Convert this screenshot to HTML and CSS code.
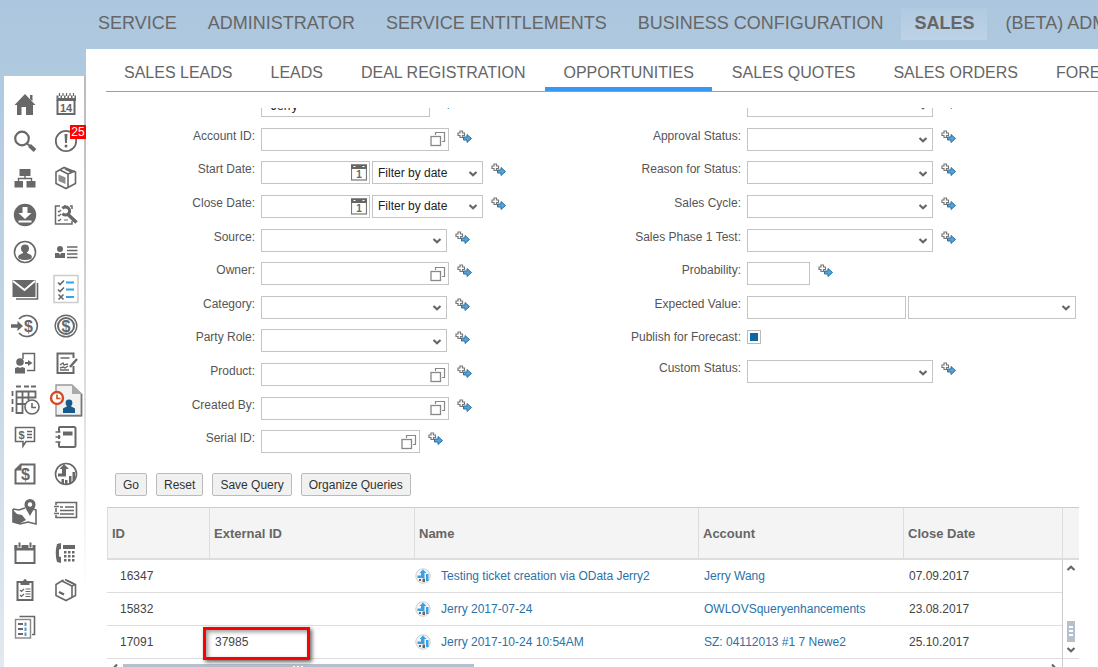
FILE: index.html
```html
<!DOCTYPE html>
<html lang="en">
<head>
  <meta charset="UTF-8" />
  <title>Opportunities</title>
  <link rel="stylesheet" href="styles.css">
</head>
<body>
  <!-- shared icons -->
  <svg class="defs" aria-hidden="true">
    <symbol id="include" viewBox="0 0 15 13">
      <path d="M3 1h2.500v2h2v2.500h-2v2H3v-2H1V3h2z" fill="#fff" stroke="#777" stroke-width="1.200"/>
      <path d="M6.500 7H10V4.500l4.500 4-4.500 4V10H6.500z" fill="#5d9fce" stroke="#2273a8"/>
    </symbol>
    <symbol id="chevron" viewBox="0 0 10 8">
      <path d="M1.500 2L5 5.200 8.500 2" fill="none" stroke="#666" stroke-width="2.200"/>
    </symbol>
    <symbol id="lookup" viewBox="0 0 16 16">
      <path d="M5.500 4V1.500h9v9H12" fill="none" stroke="#888" stroke-width="1.200"/>
      <rect x="1" y="5.500" width="9.500" height="9" fill="#fff" stroke="#888" stroke-width="1.300"/>
    </symbol>
    <symbol id="datepick" viewBox="0 0 16 17">
      <rect x=".5" y="1" width="15" height="15" fill="#fff" stroke="#777" stroke-width="1.200"/>
      <path d="M0 .5h16V5H0z" fill="#666"/>
      <path d="M2.500 2h2v1h-2zM11.500 2h2v1h-2z" fill="#fff"/>
      <text x="8" y="14" text-anchor="middle" class="tiny">1</text>
    </symbol>
    <symbol id="opp" viewBox="0 0 16 16">
      <circle cx="8" cy="8" r="7.200" fill="#f4f6f8" stroke="#ccc"/>
      <path d="M2.500 7.500H6V5H4.500L8 1.500 11.500 5H9.500v5h-7z" fill="#3aa0e0"/>
      <path d="M11 6h2.500v7H11z" fill="#3aa0e0"/>
      <path d="M4 11h2v2H4zM7.500 10.500H10V14H7.500z" fill="#666"/>
    </symbol>
  </svg>

  <nav class="top-nav">
    <a href="#">SERVICE</a>
    <a href="#">ADMINISTRATOR</a>
    <a href="#">SERVICE ENTITLEMENTS</a>
    <a href="#">BUSINESS CONFIGURATION</a>
    <a href="#" class="active">SALES</a>
    <a href="#">(BETA) ADMINISTRATOR</a>
  </nav>

  <div class="layout">
    <aside class="sidebar">
      <a href="#" aria-label="Home"><svg viewBox="0 0 24 24"><path class="f" d="M12 2l10.500 11H20v10h-7v-8H8.500v8H4V13H1.500zM17 3h2.500v6L17 7z"/></svg></a>
      <a href="#" aria-label="Calendar"><svg viewBox="0 0 24 24"><path d="M3.500 8v14h17V8" stroke-width="2"/><path class="f" d="M2.500 3.500h2V6h2V3.500h1.500V6h2V3.500h1.500V6h2V3.500H15V6h2V3.500h1.500V6h2V3.500h1.500V9h-19.500z"/><path d="M5.500 1v3M9 1v3M12.500 1v3M16 1v3M19.500 1v3" stroke-width="1.200"/><text x="12" y="20" text-anchor="middle" class="digits">14</text></svg></a>
      <a href="#" aria-label="Search"><svg viewBox="0 0 24 24"><circle cx="9" cy="9.500" r="6.800" stroke-width="2.200"/><path d="M14 14.500L17 17" stroke-width="2"/><path d="M16.500 16.500l5.500 5" stroke-width="4"/></svg></a>
      <a href="#" aria-label="Alerts"><svg viewBox="0 0 24 24"><circle cx="12" cy="12" r="10.200" stroke-width="1.800"/><path class="f" d="M10.500 5h3l-.6 9h-1.800z"/><circle class="f" cx="12" cy="17" r="1.500"/></svg><span class="badge">25</span></a>
      <a href="#" aria-label="Organization"><svg viewBox="0 0 24 24"><path class="f" d="M6.500 3h11v7h-11zM1.500 15H10v6.500H1.500zM13.500 15H22.500v6.500h-9z"/><path d="M12 9v3.500M5.500 16v-3.500h13V16" stroke-width="1.400"/></svg></a>
      <a href="#" aria-label="Products"><svg viewBox="0 0 24 24"><path d="M10 1.500L2 6v11.500l10 5 9.500-5V6z" stroke-width="1.600"/><path d="M6 4l8 4v13M14 8l7-3" stroke-width="1.600"/><path d="M11 2.500l7 3.500" stroke-width="2"/><path class="f" d="M4.500 8.500l7 3V18l-7-3z" opacity=".75"/></svg></a>
      <a href="#" aria-label="Download"><svg viewBox="0 0 24 24"><circle class="f" cx="12" cy="12" r="11.200"/><path d="M9.500 4h5v6h4L12 16 5.500 10h4zM5.500 17.500h13v2h-13z" fill="#fff" stroke="none"/></svg></a>
      <a href="#" aria-label="Service check"><svg viewBox="0 0 24 24"><path d="M6 3H1.500v18H18v-3M12 3h-2M16 3h2v3" stroke-width="1.500"/><path d="M4 8l1 1 2-2M4 12l1 1 2-2M4 17l1 1 2-2M10 17h4" stroke-width="1.200"/><path d="M14 11.500l8.500 8" stroke-width="3.500"/><path d="M8.500 5.500a4 4 0 1 1 0 5" stroke-width="3"/></svg></a>
      <a href="#" aria-label="Contact"><svg viewBox="0 0 24 24"><circle cx="12" cy="12" r="10.500" stroke-width="1.600"/><circle class="f" cx="12" cy="8.500" r="4"/><path class="f" d="M10 11h4v2l4 2c1 1 1 2 .500 3.500Q12 21.500 5.500 18.500C5 17 5 16 6 15l4-2z"/></svg></a>
      <a href="#" aria-label="Contact list"><svg viewBox="0 0 24 24"><circle class="f" cx="6" cy="9" r="3"/><path class="f" d="M1 13l4 0 1 2 1-2 4 0v5H1z"/><path d="M13 7h10.500M13 10.500h10.500M13 14h10.500M13 17.500h10.500" stroke-width="1.500"/></svg></a>
      <a href="#" aria-label="Mail"><svg viewBox="0 0 24 24"><path class="f" d="M-.5 3H22.500v17H-.5z"/><path d="M0 4l11.500 9L22 4" stroke="#fff" stroke-width="1.800"/><path d="M24.500 6v16H3" stroke-width="1.600"/></svg></a>
      <a href="#" aria-label="Tasks"><svg viewBox="0 0 24 24"><rect x="0" y="-1.500" width="24" height="27" stroke="#ccc" stroke-width="1.500"/><path d="M4 5.500l2 2 4-4M4 12.500l2 2 4-4M4.500 17.500l5 5M9.500 17.500l-5 5" stroke-width="1.600"/><path d="M12 5.500h8M12 12.500h8M12 20h8" stroke="#34a4ea" stroke-width="1.800"/></svg></a>
      <a href="#" aria-label="Sales lead"><svg viewBox="0 0 24 24"><path d="M6 5a10.500 10.500 0 1 1 0 14" stroke-width="1.600"/><path d="M-2 12h8" stroke-width="3.500"/><path class="f" d="M4.500 7l5.500 5-5.500 5z"/><text x="15.500" y="18" text-anchor="middle" class="dollar">$</text></svg></a>
      <a href="#" aria-label="Deals"><svg viewBox="0 0 24 24"><circle cx="12" cy="12" r="10.800" stroke-width="1.400"/><circle cx="12" cy="12" r="8" stroke-width="2"/><text x="12" y="17.500" text-anchor="middle" class="dollar">$</text></svg></a>
      <a href="#" aria-label="Partner entry"><svg viewBox="0 0 24 24"><path d="M10 8V2.500h11.500v17H14" stroke-width="1.500"/><circle class="f" cx="7" cy="11" r="3.800"/><path class="f" d="M2 17l3-1 2 1 2-1 3 1v5.500H2z"/><path d="M12 12h4" stroke-width="2"/><path class="f" d="M15 9l4.500 3-4.500 3z"/></svg></a>
      <a href="#" aria-label="Contracts"><svg viewBox="0 0 24 24"><path d="M19.500 7V2.500h-16v19.500h16v-7" stroke-width="2"/><path d="M6.500 7h9" stroke-width="1.500"/><path d="M6 14l3-2 1 2 4-1M6 17l3-1 2 1 3-2M6 19h9" stroke-width="1.400"/><path d="M23 8l-7 8" stroke-width="2.400"/></svg></a>
      <a href="#" aria-label="Schedule"><svg viewBox="0 0 24 24"><path d="M3-1.500h5M11-1.500h5M18-1.500h5M-.5 3v5M-.5 11v5M-.5 19v5" stroke-width="1.800"/><path d="M3.500 3.500h19v6h-19zM3.500 9.500v15.500h6v-21.500M3.500 16h11M15.500 3.500v9" stroke-width="1.800"/><circle cx="19" cy="19" r="7" fill="#fff" stroke-width="1.600"/><path d="M19 15v4.500h4" stroke-width="1.600"/></svg></a>
      <a href="#" aria-label="Customer visits"><svg viewBox="0 0 24 24"><path d="M2-3h16l9.500 9v22H2z" fill="#f1f1f1" stroke="#999" stroke-width="1.400"/><path d="M18-3v9h9.500z" fill="#aaa" stroke="none"/><path d="M2 27.500h25.500V6" stroke="#777" stroke-width="1.600"/><circle cx="3" cy="10" r="6" fill="#fff" stroke="#d04a28" stroke-width="2.400"/><path d="M3 6.500V10.500h3.500" stroke="#d04a28" stroke-width="1.600"/><circle cx="15" cy="15" r="3.400" fill="#175b8c" stroke="none"/><path d="M9 25v-4.500l4.500-2.500h3l4.500 2.500V25z" fill="#175b8c" stroke="none"/></svg></a>
      <a href="#" aria-label="Pricing"><svg viewBox="0 0 24 24"><path d="M2.500 2.500h19v14H13l-3 4.500v-4.500H2.500z" stroke-width="1.600"/><path d="M14 6.500h5M14 9.500h5M14 12.500h5" stroke-width="1.500"/><text x="8.500" y="13.500" text-anchor="middle" class="digits">$</text></svg></a>
      <a href="#" aria-label="Notebook"><svg viewBox="0 0 24 24"><path d="M5 7V3q0-1 1-1h14q1.500 0 1.500 1.500v17q0 1.500-1.500 1.500H6q-1 0-1-1v-4M5 10v4" stroke-width="2"/><path d="M1.500 7h5M1.500 12h5M1.500 17h5" stroke-width="1.600"/><path class="f" d="M9 6.500h9.500v4H9z"/></svg></a>
      <a href="#" aria-label="Quotes"><svg viewBox="0 0 24 24"><path d="M8 2.500h13.500v19h-19V8z" stroke-width="2"/><path class="f" d="M1.500 8.500l7-7v7z"/><text x="12.500" y="17.500" text-anchor="middle" class="dollar">$</text></svg></a>
      <a href="#" aria-label="Opportunities"><svg viewBox="0 0 24 24"><circle cx="12" cy="12" r="10.500" stroke-width="1.600"/><path class="f" d="M4 11.500h4V7H5.500L10 2l5 5h-3v7.500H4zM11 18h2.500v4H11zM15 14h2.500v7H15zM18.500 10H21v9l-2.500 1zM7.500 17H10v5H7.500z"/></svg></a>
      <a href="#" aria-label="Map"><svg viewBox="0 0 24 24"><path d="M0 10v13l7 2 8-2 8 2V11l-3-1M0 10l6 1 6-2" stroke-width="1.600"/><path class="f" d="M0 11l4 4 5 1 4 5-7 4-6-2z"/><path class="f" d="M17 0a5.500 5.500 0 0 0-5.500 5.500C11.500 9 14 11 17 17c3-6 5.500-8 5.500-11.500A5.500 5.500 0 0 0 17 0z"/><circle cx="17" cy="5.500" r="2.200" fill="#fff" stroke="none"/></svg></a>
      <a href="#" aria-label="Tickets"><svg viewBox="0 0 24 24"><path d="M2 6V3.500h20.500v15H2V16M2 9v4" stroke-width="1.600"/><path d="M0 7.500h5M0 14.500h5M6 8h3M11 8h9M6 11.500h14M6 15h14" stroke-width="1.500"/></svg></a>
      <a href="#" aria-label="Activities"><svg viewBox="0 0 24 24"><rect x="2.500" y="5" width="19" height="17" stroke-width="2"/><path class="f" d="M1.500 4H21.500v5.500H1.500z"/><path d="M6.500 1.500V7M17.500 1.500V7" stroke="#fff" stroke-width="4"/><path d="M6.500 1.500v5M17.500 1.500v5" stroke-width="2"/></svg></a>
      <a href="#" aria-label="Phone calls"><svg viewBox="0 0 24 24"><path class="f" d="M3 3l4-1v6l-2 .5v7l2 .5v6l-4-1Q.5 12 3 3zM9 4h12v4H9zM10 10h2.500v2.500H10zM14 10h2.500v2.500H14zM18 10h2.500v2.500H18zM10 14h2.500v2.500H10zM14 14h2.500v2.500H14zM18 14h2.500v2.500H18zM10 18h2.500v2.500H10zM14 18h2.500v2.500H14zM18 18h2.500v2.500H18z"/></svg></a>
      <a href="#" aria-label="Surveys"><svg viewBox="0 0 24 24"><rect x="4.500" y="4" width="15" height="18" stroke-width="2"/><path class="f" d="M7.500 3h2.500q2-4 4 0h2.500v4h-9z"/><path d="M7 12l1.500 1.500 2.500-2.500M7 17l1.500 1.500 2.500-2.500M12.500 11h5M12.500 13.500h5M12.500 16h5M12.500 18.500h5" stroke-width="1.200"/></svg></a>
      <a href="#" aria-label="Packages"><svg viewBox="0 0 24 24"><path d="M9.500 2L2 6.500v11l10 5 9.500-5v-11L13 2.500" stroke-width="1.600"/><path d="M8 3l10 5v11M18 8l3-1.500M11 1.500l9 4.500" stroke-width="1.600"/><path d="M5 14l5 2.500" stroke-width="2.400"/></svg></a>
      <a href="#" aria-label="Reports"><svg viewBox="0 0 24 24"><path d="M6.500 1.500h15v18H19" stroke-width="1.600"/><rect x="2.500" y="4.500" width="15" height="18.500" stroke="#888" stroke-width="1.400"/><path d="M5 9h5M5 14h5M5 19h5" stroke-width="1.800"/><path d="M12.500 7.500V11M12.500 12.500V16M12.500 17.500V21" stroke="#4b9ed0" stroke-width="2"/></svg></a>
    </aside>

    <main class="panel">
      <nav class="tabs">
        <a href="#">SALES LEADS</a>
        <a href="#">LEADS</a>
        <a href="#">DEAL REGISTRATION</a>
        <a href="#" class="active">OPPORTUNITIES</a>
        <a href="#">SALES QUOTES</a>
        <a href="#">SALES ORDERS</a>
        <a href="#">FORECASTS</a>
      </nav>

      <div class="content">
        <form>
          <div class="fields">
            <div class="column">
              <div class="row"><label for="name">Name:</label><input type="text" id="name" class="w-name" value="Jerry"><svg class="inc"><use href="#include"/></svg></div>
              <div class="row"><label for="account">Account ID:</label><span class="field w-lookup"><input type="text" id="account"><svg class="look"><use href="#lookup"/></svg></span><svg class="inc"><use href="#include"/></svg></div>
              <div class="row"><label for="start">Start Date:</label><span class="field w-date"><input type="text" id="start"><svg class="date"><use href="#datepick"/></svg></span><span class="field w-filter"><select aria-label="Start date filter"><option>Filter by date</option></select><svg class="chev"><use href="#chevron"/></svg></span><svg class="inc"><use href="#include"/></svg></div>
              <div class="row"><label for="close">Close Date:</label><span class="field w-date"><input type="text" id="close"><svg class="date"><use href="#datepick"/></svg></span><span class="field w-filter"><select aria-label="Close date filter"><option>Filter by date</option></select><svg class="chev"><use href="#chevron"/></svg></span><svg class="inc"><use href="#include"/></svg></div>
              <div class="row"><label for="source">Source:</label><span class="field w-select"><select id="source"><option></option></select><svg class="chev"><use href="#chevron"/></svg></span><svg class="inc"><use href="#include"/></svg></div>
              <div class="row"><label for="owner">Owner:</label><span class="field w-lookup"><input type="text" id="owner"><svg class="look"><use href="#lookup"/></svg></span><svg class="inc"><use href="#include"/></svg></div>
              <div class="row"><label for="category">Category:</label><span class="field w-select"><select id="category"><option></option></select><svg class="chev"><use href="#chevron"/></svg></span><svg class="inc"><use href="#include"/></svg></div>
              <div class="row"><label for="party">Party Role:</label><span class="field w-select"><select id="party"><option></option></select><svg class="chev"><use href="#chevron"/></svg></span><svg class="inc"><use href="#include"/></svg></div>
              <div class="row"><label for="product">Product:</label><span class="field w-lookup"><input type="text" id="product"><svg class="look"><use href="#lookup"/></svg></span><svg class="inc"><use href="#include"/></svg></div>
              <div class="row"><label for="created">Created By:</label><span class="field w-lookup"><input type="text" id="created"><svg class="look"><use href="#lookup"/></svg></span><svg class="inc"><use href="#include"/></svg></div>
              <div class="row"><label for="serial">Serial ID:</label><span class="field w-medium"><input type="text" id="serial"><svg class="look"><use href="#lookup"/></svg></span><svg class="inc"><use href="#include"/></svg></div>
            </div>

            <div class="column short">
              <div class="row"><label for="status">Status:</label><span class="field w-select"><select id="status"><option></option></select><svg class="chev"><use href="#chevron"/></svg></span><svg class="inc"><use href="#include"/></svg></div>
              <div class="row"><label for="approval">Approval Status:</label><span class="field w-select"><select id="approval"><option></option></select><svg class="chev"><use href="#chevron"/></svg></span><svg class="inc"><use href="#include"/></svg></div>
              <div class="row"><label for="reason">Reason for Status:</label><span class="field w-select"><select id="reason"><option></option></select><svg class="chev"><use href="#chevron"/></svg></span><svg class="inc"><use href="#include"/></svg></div>
              <div class="row"><label for="cycle">Sales Cycle:</label><span class="field w-select"><select id="cycle"><option></option></select><svg class="chev"><use href="#chevron"/></svg></span><svg class="inc"><use href="#include"/></svg></div>
              <div class="row"><label for="phase">Sales Phase 1 Test:</label><span class="field w-select"><select id="phase"><option></option></select><svg class="chev"><use href="#chevron"/></svg></span><svg class="inc"><use href="#include"/></svg></div>
              <div class="row"><label for="prob">Probability:</label><input type="text" id="prob" class="w-small"><svg class="inc"><use href="#include"/></svg></div>
              <div class="row"><label for="value">Expected Value:</label><input type="text" id="value" class="w-medium"><span class="field w-currency"><select aria-label="Currency"><option></option></select><svg class="chev"><use href="#chevron"/></svg></span></div>
              <div class="row check"><label for="publish">Publish for Forecast:</label><input type="checkbox" id="publish" checked></div>
              <div class="row"><label for="custom">Custom Status:</label><span class="field w-select"><select id="custom"><option></option></select><svg class="chev"><use href="#chevron"/></svg></span><svg class="inc"><use href="#include"/></svg></div>
            </div>
          </div>

          <div class="buttons">
            <button type="submit">Go</button>
            <button type="reset">Reset</button>
            <button type="button">Save Query</button>
            <button type="button">Organize Queries</button>
          </div>
        </form>

        <div class="results">
          <table>
            <colgroup><col class="c-id"><col class="c-ext"><col class="c-name"><col class="c-account"><col></colgroup>
            <thead>
              <tr><th>ID</th><th>External ID</th><th>Name</th><th>Account</th><th>Close Date</th></tr>
            </thead>
            <tbody>
              <tr><td class="id">16347</td><td></td><td class="name"><svg><use href="#opp"/></svg><a href="#">Testing ticket creation via OData Jerry2</a></td><td><a href="#">Jerry Wang</a></td><td>07.09.2017</td></tr>
              <tr><td class="id">15832</td><td></td><td class="name"><svg><use href="#opp"/></svg><a href="#">Jerry 2017-07-24</a></td><td><a href="#">OWLOVSqueryenhancements</a></td><td>23.08.2017</td></tr>
              <tr><td class="id">17091</td><td class="marked">37985<span class="marker"></span></td><td class="name"><svg><use href="#opp"/></svg><a href="#">Jerry 2017-10-24 10:54AM</a></td><td><a href="#">SZ: 04112013 #1 7 Newe2</a></td><td>25.10.2017</td></tr>
            </tbody>
          </table>
          <div class="vscroll">
            <div class="vhead"></div>
            <div class="vtrack">
              <svg class="chev up"><use href="#chevron"/></svg>
              <div class="vthumb"></div>
              <svg class="chev"><use href="#chevron"/></svg>
            </div>
          </div>
          <div class="hscroll">
            <svg class="chev left"><use href="#chevron"/></svg>
            <div class="htrack"><div class="hthumb"></div></div>
            <svg class="chev right"><use href="#chevron"/></svg>
          </div>
          <div class="corner"></div>
        </div>
      </div>
    </main>
  </div>
</body>
</html>
```
FILE: styles.css
```css
* {
  box-sizing: border-box;
}
body {
  margin: 0;
  height: 100vh;
  display: flex;
  flex-direction: column;
  overflow: hidden;
  font-family: "Liberation Sans", Arial, sans-serif;
  font-size: 12px;
  color: #444;
  background: linear-gradient(#abc6de, #bfd3e4 45%, #e2e9ef);
}
a {
  text-decoration: none;
  color: #2a72a8;
}
.defs {
  display: none;
}

/* top navigation */
.top-nav {
  display: flex;
  gap: 5px;
  height: 49px;
  padding: 8px 0 9px 85px;
  flex-shrink: 0;
  overflow: hidden;
}
.top-nav a {
  padding: 0 13px;
  font-size: 18px;
  line-height: 30px;
  color: #666;
  white-space: nowrap;
}
.top-nav .active {
  font-weight: bold;
  background: linear-gradient(#b1cae1, #bdd2e6);
}

.layout {
  display: flex;
  flex: 1;
  min-height: 0;
}

/* icon bar */
.sidebar {
  display: grid;
  grid-template-columns: 41px 41px;
  grid-template-rows: repeat(11, 37px) 42px;
  grid-auto-rows: 37px;
  flex-shrink: 0;
  margin: 27px 0 0 4px;
  padding-top: 9px;
  background: linear-gradient(#bbb, #ddd 60%, #fff) right top / 2px 515px no-repeat, #fff;
}
.sidebar a {
  position: relative;
  display: flex;
  align-items: center;
  justify-content: center;
  height: 37px;
}
.sidebar svg {
  width: 24px;
  height: 24px;
  overflow: visible;
  fill: none;
  stroke: #686868;
}
.sidebar .f {
  fill: #686868;
  stroke: none;
}
.sidebar text,
.tiny {
  fill: #666;
  stroke: none;
  font-weight: bold;
}
.tiny {
  font-size: 10px;
}
.digits {
  font-size: 11px;
}
.dollar {
  font-size: 16px;
}
.badge {
  position: absolute;
  top: 3px;
  right: 0;
  width: 16px;
  background: #f00;
  color: #fff;
  line-height: 14px;
  text-align: center;
}

/* work area */
.panel {
  flex: 1;
  min-width: 0;
  display: flex;
  flex-direction: column;
  background: #fff;
}
.tabs {
  display: flex;
  gap: 2px;
  height: 43px;
  flex-shrink: 0;
  margin-left: 20px;
  overflow: hidden;
  border-bottom: 1px solid #5fadf2;
}
.tabs a {
  padding: 0 18px;
  font-size: 16px;
  line-height: 48px;
  color: #666;
  white-space: nowrap;
}
.tabs .active {
  border-bottom: 4px solid #3797f5;
}
.content {
  margin: 16px 19px 0 21px;
  overflow: hidden;
  flex: 1;
}

/* query form, scrolled down a little */
form {
  margin-top: -14px;
}
.fields {
  display: grid;
  grid-template-columns: 1fr 1fr;
  align-items: start;
}
.column {
  display: flex;
  flex-direction: column;
  height: 370px;
}
.column.short {
  height: 300px;
}
.row {
  display: flex;
  flex: 1;
  align-items: flex-start;
  gap: 2px;
}
.row.check {
  flex: 0 0 31px;
}
.row label {
  width: 148px;
  margin-right: 4px;
  line-height: 16px;
  text-align: right;
  color: #555;
  white-space: nowrap;
}
.field {
  display: grid;
  align-items: center;
}
.field > * {
  grid-area: 1 / 1;
}
.field svg {
  justify-self: end;
  pointer-events: none;
}
input[type="text"],
select {
  height: 23px;
  width: 100%;
  margin: 0;
  padding: 0 5px;
  border: 1px solid #c4c4c4;
  border-radius: 0;
  background: #fff;
  font: inherit;
  color: #222;
  appearance: none;
}
input[type="text"].w-name {
  width: 169px;
  padding-left: 9px;
}
input[type="text"].w-medium,
.w-medium {
  width: 159px;
}
input[type="text"].w-small {
  width: 63px;
}
.w-lookup {
  width: 188px;
}
.w-select {
  width: 186px;
}
.w-date {
  width: 109px;
}
.w-filter {
  width: 111px;
}
.w-currency {
  width: 168px;
}
.chev {
  width: 10px;
  height: 8px;
}
.field .chev {
  margin: 2px 5px 0 0;
}
.look {
  width: 16px;
  height: 16px;
  margin-right: 3px;
}
.date {
  width: 16px;
  height: 17px;
  margin-right: 3px;
}
.inc {
  width: 15px;
  height: 13px;
  margin: 2px 0 0 6px;
}
input[type="checkbox"] {
  appearance: none;
  width: 14px;
  height: 14px;
  margin: 1px 0 0;
  border: 1px solid #bbb;
  background: #fff;
}
input[type="checkbox"]:checked {
  background: #0b6aa6;
  box-shadow: inset 0 0 0 2px #fff;
}

.buttons {
  display: flex;
  gap: 9px;
  margin: 9px 0 11px 8px;
}
button {
  height: 23px;
  padding: 0 7px;
  border: 1px solid #bbb;
  border-radius: 2px;
  background: #f1f1f1;
  font: inherit;
  color: #333;
}

/* result list */
.results {
  display: grid;
  grid-template-columns: 1fr 17px;
}
table {
  width: 100%;
  table-layout: fixed;
  border-collapse: separate;
  border-spacing: 0;
}
.c-id {
  width: 102px;
}
.c-ext,
.c-account {
  width: 205px;
}
.c-name {
  width: 284px;
}
th {
  height: 53px;
  padding: 0 4px;
  border-top: 1px solid #ccc;
  border-bottom: 2px solid #ddd;
  border-left: 1px solid #ddd;
  background: #f4f4f4;
  color: #666;
  font-size: 13px;
  text-align: left;
}
td {
  height: 33px;
  padding: 0 6px;
  border-bottom: 1px solid #ddd;
  white-space: nowrap;
}
td.id {
  padding-left: 13px;
}
td.name {
  padding-left: 1px;
}
.name svg {
  width: 16px;
  height: 16px;
  margin-right: 10px;
  vertical-align: middle;
}
.name a {
  vertical-align: middle;
}
.marked {
  position: relative;
}
.marker {
  position: absolute;
  inset: 1px 104px -2px -6px;
  border: 3px solid #f00;
  box-shadow: 2px 2px 4px #666, inset 2px 2px 4px #999;
}
.vscroll {
  display: flex;
  flex-direction: column;
}
.vhead {
  height: 53px;
  border: solid #ddd;
  border-width: 1px 0 2px 1px;
  border-top-color: #ccc;
  background: #f4f4f4;
}
.vtrack {
  flex: 1;
  display: flex;
  flex-direction: column;
  align-items: center;
  padding: 4px 0 4px;
  border-left: 1px solid #ccc;
  border-bottom: 1px solid #ddd;
}
.up {
  transform: rotate(180deg);
}
.vthumb {
  width: 8px;
  height: 21px;
  margin: auto 0 4px;
  border: solid #b6c0cc;
  border-width: 5px 2px;
  background: repeating-linear-gradient(#fff 0 2px, #b6c0cc 2px 4px);
}
.hscroll {
  display: flex;
  align-items: center;
  height: 17px;
  padding: 0 3px;
}
.htrack {
  flex: 1;
  margin: 0 3px;
}
.hthumb {
  width: 38%;
  height: 8px;
  background: linear-gradient(90deg, #fff 2px, #b6c0cc 2px 4px, #fff 4px 6px, #b6c0cc 6px 8px, #fff 8px) center / 10px 4px no-repeat, #b6c0cc;
}
.left {
  transform: rotate(90deg);
}
.right {
  transform: rotate(-90deg);
}
.corner {
  border-left: 1px solid #ccc;
}
```
